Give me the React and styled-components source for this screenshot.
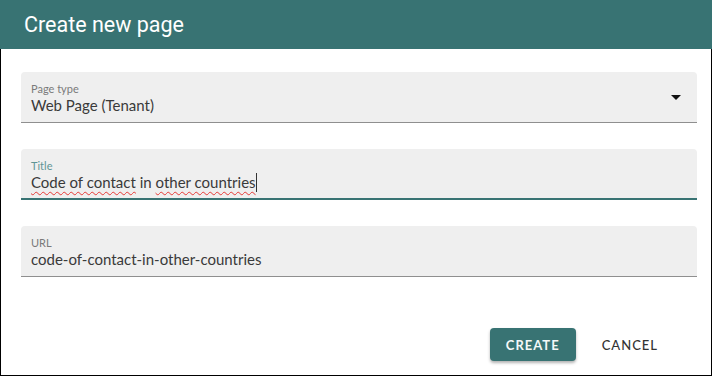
import React from "react";
import styled, { createGlobalStyle } from "styled-components";

const Global = createGlobalStyle`
  html, body { margin: 0; padding: 0; background: #fff; }
  * { box-sizing: border-box; }
`;

const Dialog = styled.div`
  width: 712px;
  height: 376px;
  border: 1px solid #000;
  border-top: none;
  display: flex;
  flex-direction: column;
  background: #fff;
  font-family: "Lato", "Open Sans", sans-serif;
`;

const Header = styled.div`
  height: 49px;
  flex: none;
  background: #387373;
  color: #fff;
  font-family: Roboto, sans-serif;
  font-size: 21.5px;
  display: flex;
  align-items: center;
  padding-left: 24px;
  margin: 0 -1px;
  padding-bottom: 1px;
`;

const Body = styled.div`
  display: flex;
  flex-direction: column;
  gap: 26px;
  padding: 23px 14px 0 20px;
`;

const Field = styled.div`
  position: relative;
  height: 51px;
  background: #efefef;
  border-radius: 4px 4px 0 0;
  border-bottom: ${(p) => (p.$focused ? "2px solid #387373" : "1px solid #8f8f8f")};
  padding: 10px 10px 0 10px;
  display: flex;
  flex-direction: column;
`;

const Label = styled.div`
  font-size: 11px;
  line-height: 13px;
  color: ${(p) => (p.$focused ? "#5f9595" : "#7a7a7a")};
`;

const Value = styled.div`
  font-size: 15px;
  line-height: 20px;
  color: #3a3a3a;
  display: flex;
  align-items: center;
  white-space: pre;
`;

const Misspelled = styled.span`
  text-decoration: underline wavy #e53935;
  text-decoration-thickness: 1px;
  text-underline-offset: 3px;
`;

const Caret = styled.span`
  display: inline-block;
  width: 1px;
  height: 19px;
  background: #333;
`;

const Arrow = styled.div`
  position: absolute;
  right: 16px;
  top: 23px;
  width: 0;
  height: 0;
  border-left: 5px solid transparent;
  border-right: 5px solid transparent;
  border-top: 5px solid #111;
`;

const Actions = styled.div`
  display: flex;
  justify-content: flex-end;
  align-items: center;
  gap: 18px;
  padding: 51px 45px 0 0;
`;

const Button = styled.button`
  height: 33px;
  border: none;
  border-radius: 4px;
  font-family: "Lato", "Open Sans", sans-serif;
  font-size: 13px;
  letter-spacing: 1px;
  text-transform: uppercase;
  cursor: pointer;
  padding: 0 ${(p) => (p.$primary ? 16 : 8)}px;
  background: ${(p) => (p.$primary ? "#387373" : "transparent")};
  color: ${(p) => (p.$primary ? "#f4f8f8" : "#333")};
  font-weight: ${(p) => (p.$primary ? 700 : 500)};
  box-shadow: ${(p) => (p.$primary ? "0 2px 3px rgba(0,0,0,0.3)" : "none")};
  min-width: ${(p) => (p.$primary ? 85 : 72)}px;
`;

export default function App() {
  return (
    <>
      <Global />
      <Dialog>
        <Header>Create new page</Header>
        <Body>
          <Field>
            <Label>Page type</Label>
            <Value>Web Page (Tenant)</Value>
            <Arrow />
          </Field>
          <Field $focused>
            <Label $focused>Title</Label>
            <Value>
              <Misspelled>Code of contact</Misspelled> in{" "}
              <Misspelled>other countries</Misspelled>
              <Caret />
            </Value>
          </Field>
          <Field>
            <Label>URL</Label>
            <Value>code-of-contact-in-other-countries</Value>
          </Field>
        </Body>
        <Actions>
          <Button $primary>Create</Button>
          <Button>Cancel</Button>
        </Actions>
      </Dialog>
    </>
  );
}
